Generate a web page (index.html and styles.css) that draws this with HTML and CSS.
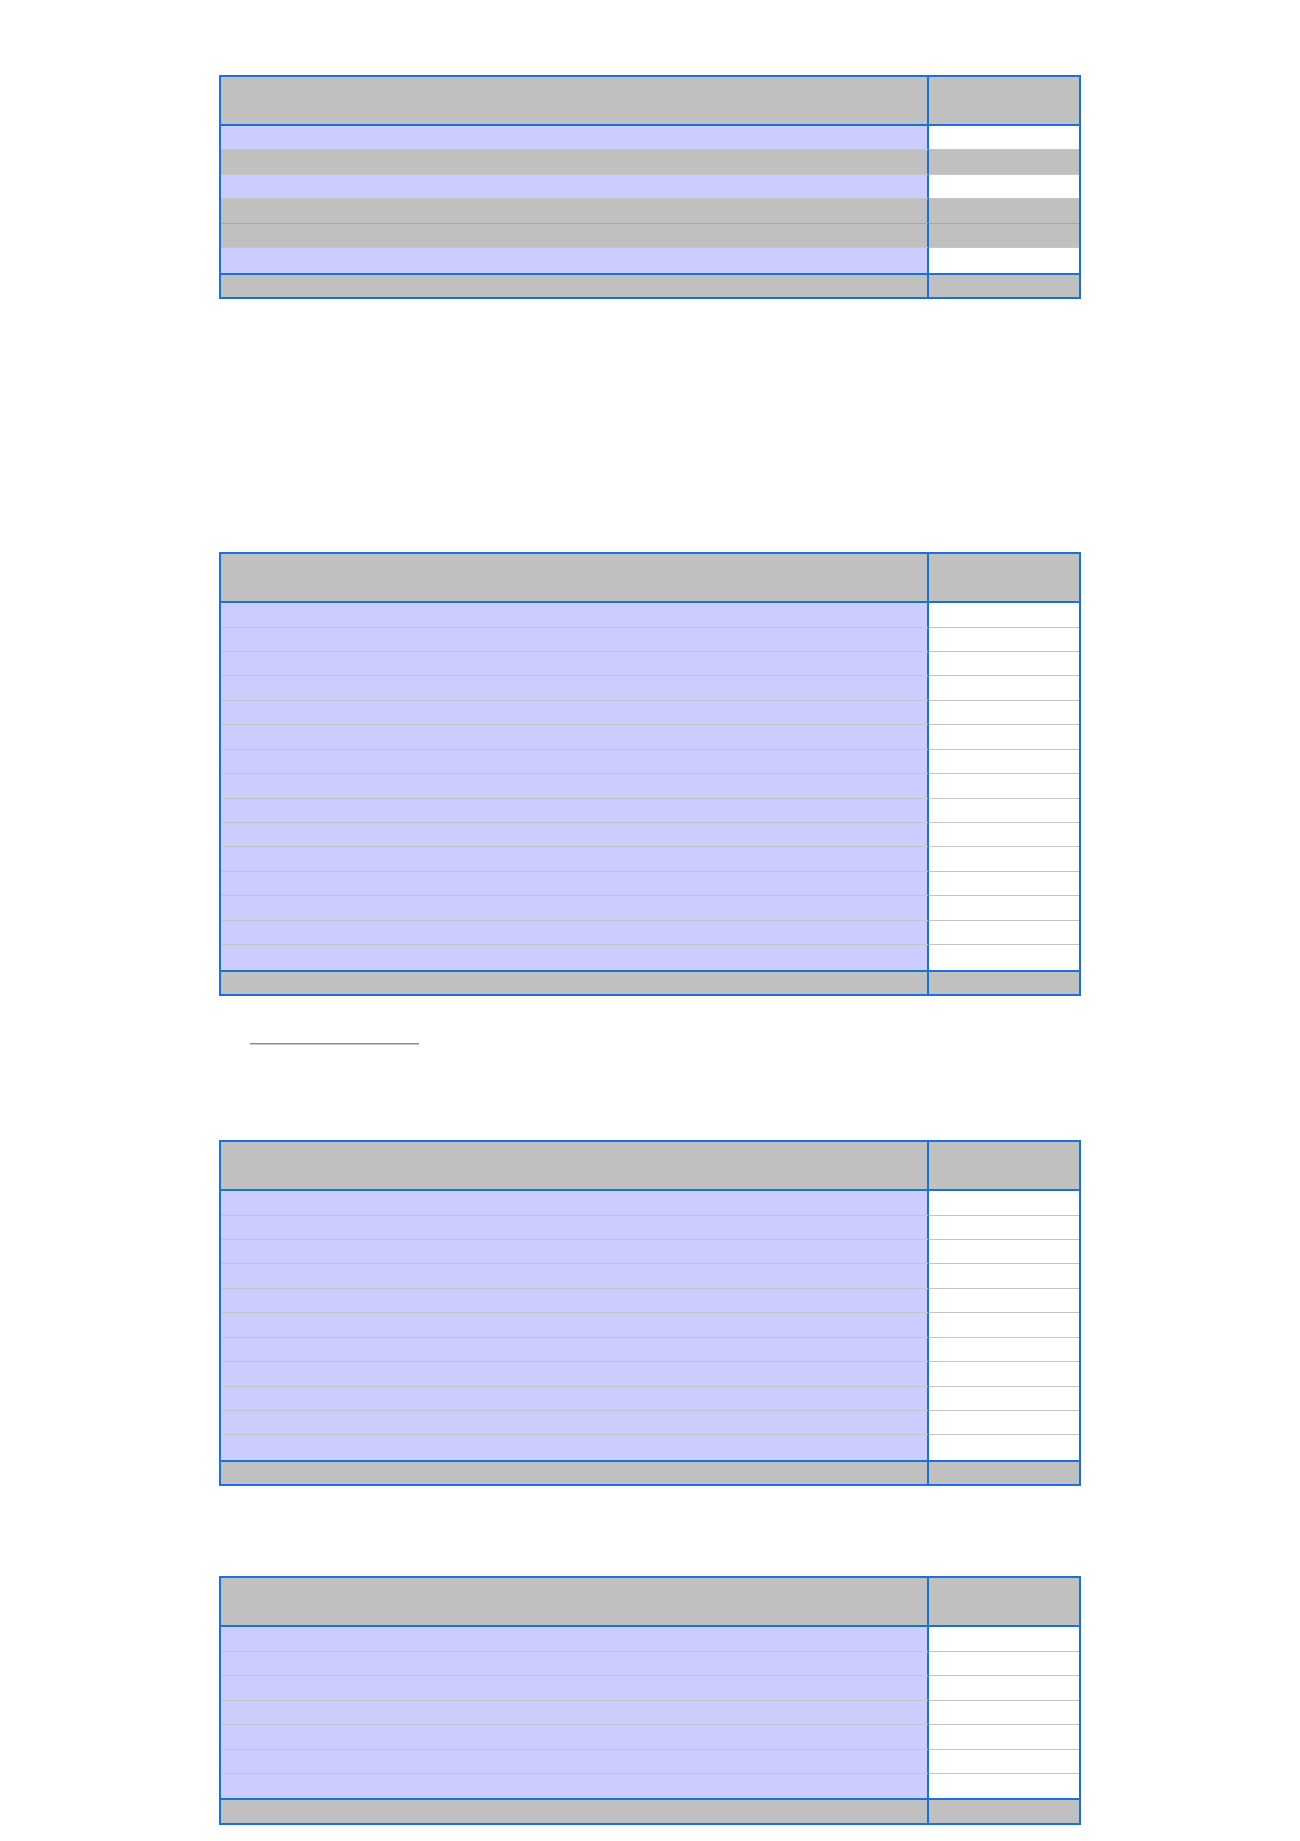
FILE: index.html
```html
<!DOCTYPE html>
<html lang="en">
<head>
<meta charset="utf-8">
<title>Tables</title>
<link rel="stylesheet" href="styles.css">
</head>
<body>
<main class="page">
  <table class="grid grid-first">
    <tr class="head"><td class="c1"></td><td class="c2"></td></tr>
    <tr class="row lav"><td class="c1"></td><td class="c2"></td></tr>
    <tr class="row gry"><td class="c1"></td><td class="c2"></td></tr>
    <tr class="row lav"><td class="c1"></td><td class="c2"></td></tr>
    <tr class="row gry dark"><td class="c1"></td><td class="c2"></td></tr>
    <tr class="row gry"><td class="c1"></td><td class="c2"></td></tr>
    <tr class="row lav last"><td class="c1"></td><td class="c2"></td></tr>
    <tr class="foot"><td class="c1"></td><td class="c2"></td></tr>
  </table>

  <table class="grid grid-second">
    <tr class="head"><td class="c1"></td><td class="c2"></td></tr>
    <tr class="row lav"><td class="c1"></td><td class="c2"></td></tr>
    <tr class="row lav"><td class="c1"></td><td class="c2"></td></tr>
    <tr class="row lav"><td class="c1"></td><td class="c2"></td></tr>
    <tr class="row lav"><td class="c1"></td><td class="c2"></td></tr>
    <tr class="row lav"><td class="c1"></td><td class="c2"></td></tr>
    <tr class="row lav"><td class="c1"></td><td class="c2"></td></tr>
    <tr class="row lav"><td class="c1"></td><td class="c2"></td></tr>
    <tr class="row lav"><td class="c1"></td><td class="c2"></td></tr>
    <tr class="row lav"><td class="c1"></td><td class="c2"></td></tr>
    <tr class="row lav"><td class="c1"></td><td class="c2"></td></tr>
    <tr class="row lav"><td class="c1"></td><td class="c2"></td></tr>
    <tr class="row lav"><td class="c1"></td><td class="c2"></td></tr>
    <tr class="row lav"><td class="c1"></td><td class="c2"></td></tr>
    <tr class="row lav"><td class="c1"></td><td class="c2"></td></tr>
    <tr class="row lav last"><td class="c1"></td><td class="c2"></td></tr>
    <tr class="foot"><td class="c1"></td><td class="c2"></td></tr>
  </table>

  <div class="notes"><hr class="note-rule"></div>

  <table class="grid grid-third">
    <tr class="head"><td class="c1"></td><td class="c2"></td></tr>
    <tr class="row lav"><td class="c1"></td><td class="c2"></td></tr>
    <tr class="row lav"><td class="c1"></td><td class="c2"></td></tr>
    <tr class="row lav"><td class="c1"></td><td class="c2"></td></tr>
    <tr class="row lav"><td class="c1"></td><td class="c2"></td></tr>
    <tr class="row lav"><td class="c1"></td><td class="c2"></td></tr>
    <tr class="row lav"><td class="c1"></td><td class="c2"></td></tr>
    <tr class="row lav"><td class="c1"></td><td class="c2"></td></tr>
    <tr class="row lav"><td class="c1"></td><td class="c2"></td></tr>
    <tr class="row lav"><td class="c1"></td><td class="c2"></td></tr>
    <tr class="row lav"><td class="c1"></td><td class="c2"></td></tr>
    <tr class="row lav last"><td class="c1"></td><td class="c2"></td></tr>
    <tr class="foot"><td class="c1"></td><td class="c2"></td></tr>
  </table>

  <table class="grid grid-fourth">
    <tr class="head"><td class="c1"></td><td class="c2"></td></tr>
    <tr class="row lav"><td class="c1"></td><td class="c2"></td></tr>
    <tr class="row lav"><td class="c1"></td><td class="c2"></td></tr>
    <tr class="row lav"><td class="c1"></td><td class="c2"></td></tr>
    <tr class="row lav"><td class="c1"></td><td class="c2"></td></tr>
    <tr class="row lav"><td class="c1"></td><td class="c2"></td></tr>
    <tr class="row lav"><td class="c1"></td><td class="c2"></td></tr>
    <tr class="row lav last"><td class="c1"></td><td class="c2"></td></tr>
    <tr class="foot"><td class="c1"></td><td class="c2"></td></tr>
  </table>
</main>
</body>
</html>
```

FILE: styles.css
```css
html, body {
  margin: 0;
  padding: 0;
  background: #ffffff;
  font-family: "Liberation Serif", "Times New Roman", serif;
}

.page {
  width: 862px;
  margin: 0 auto;
  padding-top: 75px;
  padding-bottom: 16px;
}

.grid {
  width: 862px;
  border-collapse: separate;
  border-spacing: 0;
  border: 2px solid #1872dc;
  table-layout: fixed;
}

.grid td {
  padding: 0;
  box-sizing: border-box;
}

.grid .c1 {
  width: 708px;
  border-right: 2px solid #1872dc;
}

.head td {
  height: 49px;
  background: #c0c0c0;
  border-bottom: 2px solid #1872dc;
}

.row td {
  height: 24.45px;
  border-bottom: 1px solid #c4c4c4;
}

.row.lav .c1 { background: #ccccff; }
.row.lav .c2 { background: #ffffff; }
.row.gry td { background: #c0c0c0; }
.row.dark td { border-bottom-color: #a8a8a8; }
.row.last td { border-bottom: 0; }

.foot td {
  height: 24.45px;
  background: #c0c0c0;
  border-top: 2px solid #1872dc;
}

.grid-second { margin-top: 253px; }

.notes {
  padding-left: 31px;
  padding-top: 47px;
  padding-bottom: 95px;
}

.note-rule {
  width: 169px;
  margin: 0;
  border: 0;
  border-top: 1px solid #8c8c8c;
  border-bottom: 1px solid #c8c8c8;
  height: 0;
}

.grid-fourth { margin-top: 90px; }
```
